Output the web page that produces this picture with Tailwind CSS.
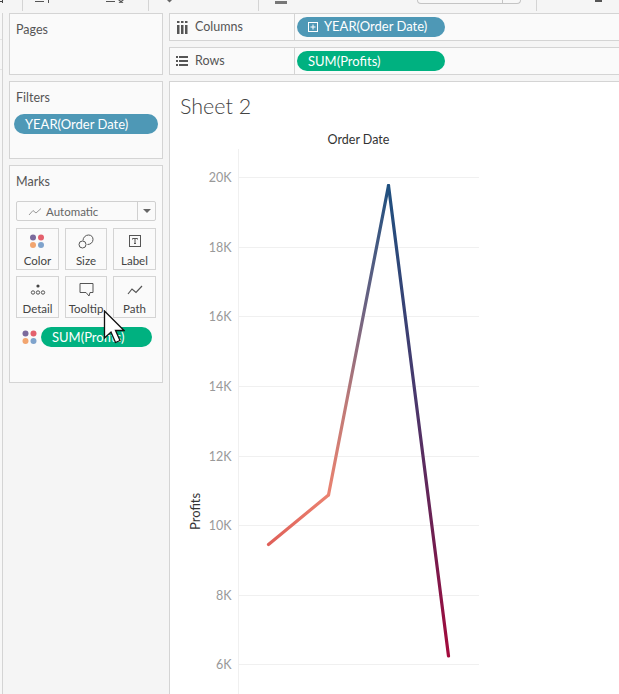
<!DOCTYPE html>
<html lang="en">
<head>
  <meta charset="UTF-8">
  <meta name="viewport" content="width=device-width, initial-scale=1.0">
  <title>Sheet 2</title>
  <script src="https://cdn.jsdelivr.net/npm/@tailwindcss/browser@4"></script>
</head>
<body class="bg-[#f5f5f5] font-['Lato','Open_Sans',sans-serif] text-[#555] overflow-hidden">
  <div class="relative w-[619px] h-[694px] overflow-hidden">

    <!-- toolbar, cut off by the top of the screenshot -->
    <header class="h-[13px] flex text-[#666]">
      <div class="w-[23px] border-r border-[#d4d4d4] h-[11px]">
        <svg width="22" height="4" fill="#444"><rect x="0" y="1" width="2" height="1"/><rect x="2" y="0" width="1" height="3"/></svg>
      </div>
      <div class="w-[126px] border-r border-[#d4d4d4] h-[11px]">
        <svg width="125" height="4" fill="#555"><rect x="12" y="1" width="9" height="1"/><rect x="25" y="0" width="1" height="3"/><rect x="83" y="1" width="9" height="1"/><path d="M95 0h2l1 1 1-1h2l-2 1.500 1.500 1.500h-2l-.5-.7-.5.7h-2l1.500-1.500z"/></svg>
      </div>
      <div class="w-[110px] border-r border-[#d4d4d4] h-[11px]">
        <svg width="109" height="4" fill="#666"><path d="M18 0h5l-2.500 2.500z"/></svg>
      </div>
      <div class="w-[278px] border-r border-[#d4d4d4] h-[11px] flex justify-between pl-[16px] pr-[15px]">
        <div class="w-[12px] h-[3px] mt-[1px] bg-[#777]"></div>
        <div class="w-[104px] h-[4px] flex justify-end bg-[#f7f7f7] border-x border-b border-[#c4c4c4] rounded-b-sm">
          <div class="w-[18px] border-l border-[#c4c4c4]"></div>
        </div>
      </div>
      <div class="flex-1 pl-[58px]">
        <div class="w-[7px] h-[2px] bg-[#555]"></div>
      </div>
    </header>

    <div class="flex h-[681px]">
      <!-- far left strip -->
      <div class="w-[9px] shrink-0">
        <div class="w-[3px] h-full border-r border-[#d4d4d4] bg-[#f7f7f7] flex flex-col pt-[26px] gap-[29px]">
          <div class="h-px bg-[#e4e4e4]"></div>
          <div class="h-px bg-[#e4e4e4]"></div>
        </div>
      </div>

      <!-- side cards -->
      <aside class="w-[154px] shrink-0 flex flex-col gap-[6px]">
        <section class="h-[62px] bg-[#fafafa] border border-[#d4d4d4] px-[6px] pt-[8px] text-[12.500px] leading-[16px]">Pages</section>
        <section class="h-[78px] bg-[#fafafa] border border-[#d4d4d4] pt-[8px] text-[12.500px] leading-[16px]">
          <div class="px-[6px]">Filters</div>
          <div class="mt-[8px] mx-[4px] h-[20px] rounded-full bg-[#4e98b6] text-white pl-[11px] leading-[20px] text-[13px]">YEAR(Order Date)</div>
        </section>
        <section class="h-[218px] bg-[#fafafa] border border-[#d4d4d4] pt-[8px] text-[12.500px] leading-[16px]">
          <div class="px-[6px]">Marks</div>
          <div class="mt-[11px] mx-[6px] h-[20px] w-[140px] flex bg-[#fafafa] border border-[#d0d0d0] rounded-[2px]">
            <div class="flex-1 flex items-center pl-[11px] gap-[4px] text-[11.500px] text-[#666] pt-[1px]">
              <svg width="14" height="10" viewBox="0 0 14 10" fill="none" stroke="#999"><path d="M1 8 5 3.500 8 6 13 1.500"/></svg>
              Automatic
            </div>
            <div class="w-[18px] border-l border-[#d0d0d0] flex items-center justify-center">
              <div class="w-0 h-0 border-x-[4px] border-x-transparent border-t-[4px] border-t-[#666]"></div>
            </div>
          </div>
          <div class="mt-[7px] mx-[6px] grid grid-cols-[43px_42px_43px] gap-x-[6px] gap-y-[6px] w-[140px] text-[11.500px] text-[#444] text-center">
            <div class="h-[42px] border border-[#d4d4d4] flex flex-col items-center justify-between pt-[5px]">
              <svg width="16" height="15" viewBox="0 0 16 15"><circle cx="3" cy="3.500" r="3" fill="#7b6a9c"/><circle cx="11" cy="3.500" r="3" fill="#e4606d"/><circle cx="3" cy="11" r="3" fill="#f2a56f"/><circle cx="11" cy="11" r="3" fill="#7fa3cc"/></svg>
              <span>Color</span>
            </div>
            <div class="h-[42px] border border-[#d4d4d4] flex flex-col items-center justify-between pt-[5px]">
              <svg width="16" height="15" viewBox="0 0 16 15" fill="none" stroke="#555"><path d="M5 6.500C5 3.500 7.500 1 10.500 1S15 3 15 5.500C15 8.500 12.500 10.500 9.500 10.500"/><circle cx="4.500" cy="10.500" r="3.500"/></svg>
              <span>Size</span>
            </div>
            <div class="h-[42px] border border-[#d4d4d4] flex flex-col items-center justify-between pt-[5px]">
              <svg width="14" height="14" viewBox="0 0 14 14"><rect x="1.500" y="1.500" width="11" height="11" fill="none" stroke="#555"/><path d="M4.500 4.500h5M7 4.500v5M6 9.500h2M4.500 4.500v1M9.500 4.500v1" stroke="#555" fill="none"/></svg>
              <span>Label</span>
            </div>
            <div class="h-[42px] border border-[#d4d4d4] flex flex-col items-center justify-between pt-[7px]">
              <svg width="16" height="12" viewBox="0 0 16 12" fill="none" stroke="#555"><circle cx="8" cy="2" r="1.600" fill="#444" stroke="none"/><circle cx="3" cy="8.500" r="1.700"/><circle cx="8" cy="8.500" r="1.700"/><circle cx="13" cy="8.500" r="1.700"/></svg>
              <span>Detail</span>
            </div>
            <div class="h-[42px] border border-[#d4d4d4] flex flex-col items-center justify-between pt-[6px]">
              <svg width="15" height="14" viewBox="0 0 15 14" fill="none" stroke="#555"><path d="M1 .5h13v9h-3l-1 3.500-3-3.500H1z"/></svg>
              <span>Tooltip</span>
            </div>
            <div class="h-[42px] border border-[#d4d4d4] flex flex-col items-center justify-between pt-[8px]">
              <svg width="16" height="11" viewBox="0 0 16 11" fill="none" stroke="#555" stroke-width="1.200"><path d="M1 9 5 4l4 3.500L15 1"/></svg>
              <span>Path</span>
            </div>
          </div>
          <div class="mt-[9px] ml-[12px] flex items-center gap-[3px]">
            <svg width="16" height="15" viewBox="0 0 16 15"><circle cx="3.500" cy="3.500" r="3" fill="#7b6a9c"/><circle cx="11.500" cy="3.500" r="3" fill="#e4606d"/><circle cx="3.500" cy="11" r="3" fill="#f2a56f"/><circle cx="11.500" cy="11" r="3" fill="#7fa3cc"/></svg>
            <div class="w-[111px] h-[20px] rounded-full bg-[#00b180] text-white pl-[11px] leading-[20px] text-[13px]">SUM(Profits)</div>
          </div>
        </section>
      </aside>

      <!-- work area -->
      <main class="ml-[6px] flex-1 flex flex-col gap-[6px] min-w-0">
        <div class="h-[28px] bg-[#fafafa] border-y border-[#d4d4d4] border-l flex items-center text-[12.500px]">
          <div class="w-[125px] h-full border-r border-[#d4d4d4] flex items-center pl-[7px] gap-[7px]">
            <svg width="11" height="13" viewBox="0 0 11 13" fill="#555"><rect x="0" y="4" width="2.500" height="9"/><rect x="4" y="4" width="2.500" height="9"/><rect x="8" y="4" width="2.500" height="9"/><rect x="0" y="0" width="2.500" height="2"/><rect x="4" y="0" width="2.500" height="2"/><rect x="8" y="0" width="2.500" height="2"/></svg>
            Columns
          </div>
          <div class="ml-[2px] w-[148px] h-[20px] rounded-full bg-[#4e98b6] text-white flex items-center pl-[11px] gap-[6px] text-[13px]">
            <svg width="10" height="10" viewBox="0 0 10 10" fill="none" stroke="#fff"><rect x=".5" y=".5" width="9" height="9"/><path d="M5 2.500v5M2.500 5h5"/></svg>
            YEAR(Order Date)
          </div>
        </div>
        <div class="h-[28px] bg-[#fafafa] border-y border-[#d4d4d4] border-l flex items-center text-[12.500px]">
          <div class="w-[125px] h-full border-r border-[#d4d4d4] flex items-center pl-[6px] gap-[7px]">
            <svg width="12" height="10" viewBox="0 0 12 10" fill="#555"><rect x="0" y="0" width="2" height="2"/><rect x="3" y="0" width="9" height="2"/><rect x="0" y="4" width="2" height="2"/><rect x="3" y="4" width="9" height="2"/><rect x="0" y="8" width="2" height="2"/><rect x="3" y="8" width="9" height="2"/></svg>
            Rows
          </div>
          <div class="ml-[2px] w-[148px] h-[20px] rounded-full bg-[#00b180] text-white pl-[11px] leading-[20px] text-[13px]">SUM(Profits)</div>
        </div>

        <!-- view -->
        <div class="flex-1 bg-white border-t border-l border-[#d4d4d4]">
          <h1 class="pl-[10px] pt-[11px] text-[21.500px] leading-[26px] font-light text-[#444]">Sheet 2</h1>
          <!-- origin of this svg is x=170, y=82 in the page -->
          <svg class="absolute left-[170px] top-[82px]" width="449" height="612" viewBox="170 82 449 612" font-family="Lato, sans-serif">
            <defs>
              <linearGradient id="seg1" gradientUnits="userSpaceOnUse" x1="268" y1="544" x2="328" y2="495"><stop offset="0" stop-color="#df5f58"/><stop offset="1" stop-color="#ea8270"/></linearGradient>
              <linearGradient id="seg2" gradientUnits="userSpaceOnUse" x1="328" y1="495" x2="388" y2="185"><stop offset="0" stop-color="#ea8270"/><stop offset=".3" stop-color="#bd7a78"/><stop offset=".6" stop-color="#6d6382"/><stop offset="1" stop-color="#1f5080"/></linearGradient>
              <linearGradient id="seg3" gradientUnits="userSpaceOnUse" x1="388" y1="185" x2="448" y2="656"><stop offset="0" stop-color="#1f5080"/><stop offset=".45" stop-color="#49386c"/><stop offset=".75" stop-color="#6f1e50"/><stop offset="1" stop-color="#a40a3c"/></linearGradient>
            </defs>
            <g stroke="#f0f0f0" shape-rendering="crispEdges">
              <path d="M238 148.500V694"/>
              <path d="M238 177.500h241M238 247.500h241M238 316.500h241M238 386.500h241M238 456.500h241M238 525.500h241M238 595.500h241M238 664.500h241"/>
            </g>
            <text x="358.500" y="144" text-anchor="middle" font-size="12.500" fill="#333">Order Date</text>
            <g font-size="12.500" fill="#999" text-anchor="end">
              <text x="231.500" y="182">20K</text>
              <text x="231.500" y="252">18K</text>
              <text x="231.500" y="321">16K</text>
              <text x="231.500" y="391">14K</text>
              <text x="231.500" y="461">12K</text>
              <text x="231.500" y="530">10K</text>
              <text x="231.500" y="600">8K</text>
              <text x="231.500" y="669">6K</text>
            </g>
            <text transform="translate(199.500 530) rotate(-90)" font-size="13" fill="#333">Profits</text>
            <g fill="none" stroke-width="3.200" stroke-linecap="round" stroke-linejoin="round">
              <path d="M268.500 544.500 328.500 495" stroke="url(#seg1)"/>
              <path d="M328.500 495 388.500 185.500" stroke="url(#seg2)"/>
              <path d="M388.500 185.500 448.500 656" stroke="url(#seg3)"/>
            </g>
          </svg>
        </div>
      </main>
    </div>

    <!-- mouse pointer over the marks card -->
    <svg class="absolute left-[103px] top-[310px]" width="22" height="36" viewBox="0 0 22 36"><path d="M1.500 1v27l6.500-6 4.500 10.500 4.500-2-4.500-10h8.500z" fill="#fff" stroke="#111" stroke-width="1.300"/></svg>
  </div>
</body>
</html>
